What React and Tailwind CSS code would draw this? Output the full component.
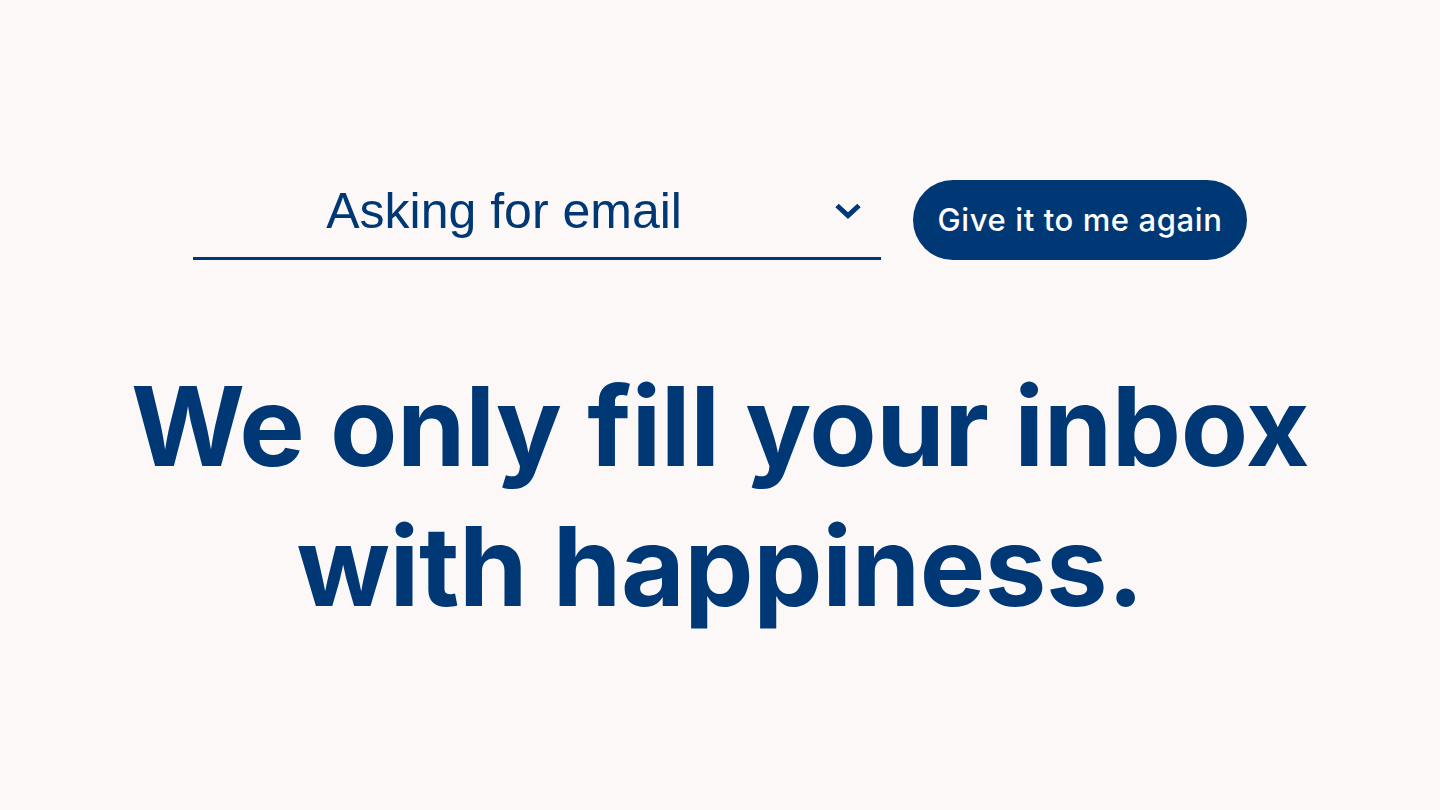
import React from "react";

function Chevron() {
  return (
    <svg width="28" height="17" viewBox="0 0 28 17" fill="none">
      <path d="M3 3.5l11 10 11-10" stroke="#003876" strokeWidth="5" strokeLinecap="butt" strokeLinejoin="miter" />
    </svg>
  );
}

export default function App() {
  return (
    <div className="min-h-[810px] w-full bg-[#fcf8f8] flex flex-col items-center pt-[180px]">
      {/* PICKER ROW */}
      <div className="flex items-start gap-8">
        <div className="w-[688px] h-[80px] border-b-[3px] border-[#003876] flex items-center pb-[16px] pr-[19px]">
          <span
            className="flex-1 mr-[18px] text-center text-[50px] leading-none text-[#003876]"
            style={{ fontFamily: '"Liberation Sans", Arial, sans-serif' }}
          >
            Asking for email
          </span>
          <Chevron />
        </div>
        <button
          className="h-[80px] px-[25px] rounded-full bg-[#003876] text-white text-[31px] font-medium tracking-[0.6px]"
          style={{ fontFamily: "Inter, sans-serif" }}
        >
          Give it to me again
        </button>
      </div>

      {/* HEADLINE */}
      <h1
        className="mt-[96px] text-center text-[110px] leading-[140px] font-bold text-[#003876] tracking-[-0.4px]"
        style={{ fontFamily: "Inter, sans-serif" }}
      >
        We only fill your inbox
        <br />
        with happiness.
      </h1>
    </div>
  );
}
